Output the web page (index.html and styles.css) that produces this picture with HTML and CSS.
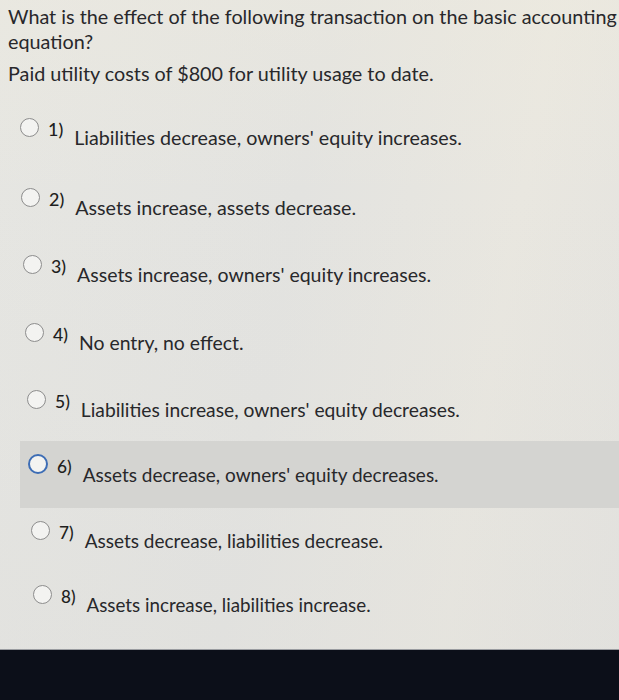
FILE: index.html
```html
<!DOCTYPE html>
<html>
<head>
<meta charset="utf-8">
<link rel="stylesheet" href="styles.css">
</head>
<body>
<div class="page">
  <div class="question">
    <p class="q-main">What is the effect of the following transaction on the basic accounting equation?</p>
    <p class="q-detail">Paid utility costs of $800 for utility usage to date.</p>
  </div>
  <ul class="options">
    <li class="option"><span class="radio"></span><span class="num">1)</span><span class="label">Liabilities decrease, owners' equity increases.</span></li>
    <li class="option"><span class="radio"></span><span class="num">2)</span><span class="label">Assets increase, assets decrease.</span></li>
    <li class="option"><span class="radio"></span><span class="num">3)</span><span class="label">Assets increase, owners' equity increases.</span></li>
    <li class="option"><span class="radio"></span><span class="num">4)</span><span class="label">No entry, no effect.</span></li>
    <li class="option"><span class="radio"></span><span class="num">5)</span><span class="label">Liabilities increase, owners' equity decreases.</span></li>
    <li class="option hover"><span class="radio"></span><span class="num">6)</span><span class="label">Assets decrease, owners' equity decreases.</span></li>
    <li class="option"><span class="radio"></span><span class="num">7)</span><span class="label">Assets decrease, liabilities decrease.</span></li>
    <li class="option"><span class="radio"></span><span class="num">8)</span><span class="label">Assets increase, liabilities increase.</span></li>
  </ul>
</div>
<div class="bezel"></div>
</body>
</html>
```
FILE: styles.css
```css
html, body {
  margin: 0;
  padding: 0;
  height: 700px;
  overflow: hidden;
}
body {
  display: flex;
  flex-direction: column;
  font-family: Lato, "Open Sans", sans-serif;
  color: #28282b;
  background: linear-gradient(100deg, #e6e6e2 0%, #e3e3e0 45%, #e9e7e0 75%, #e4e3df 100%);
}
.page {
  height: 649px;
  flex: none;
  overflow: hidden;
  background: linear-gradient(180deg, rgba(240,236,222,0.35) 0%, rgba(230,230,228,0) 30%, rgba(220,220,218,0.3) 100%);
}
.question {
  padding: 4px 0 0 8px;
  font-size: 19.8px;
  line-height: 25px;
}
.q-main {
  margin: 0;
  width: 640px;
}
.q-detail {
  margin: 7px 0 0;
}
.options {
  list-style: none;
  margin: 0;
  padding: 19px 0 0;
}
.option {
  height: 64px;
  display: flex;
  align-items: center;
  margin-left: 20px;
  padding-left: 0;
  font-size: 19.7px;
}
.option:nth-child(2) { padding-left: 1px; margin-top: 6px; }
.option:nth-child(3) { padding-left: 3px; margin-top: 3px; font-size: 19.5px; }
.option:nth-child(4) { padding-left: 5px; margin-top: 4px; font-size: 19.4px; }
.option:nth-child(5) { padding-left: 7px; margin-top: 3px; font-size: 19.25px; }
.option:nth-child(6) { padding-left: 8px; font-size: 19px; }
.option:nth-child(7) { padding-left: 11px; font-size: 19px; }
.option:nth-child(8) { padding-left: 13px; font-size: 18.8px; }
.option.hover {
  height: 67px;
  background: #d4d4d1;
}
.radio {
  flex: none;
  width: 17px;
  height: 17px;
  border: 1.5px solid #8d8d8d;
  border-radius: 50%;
  background: #f3f3f1;
  margin-bottom: 20px;
}
.hover .radio {
  border: 2px solid #3d6db5;
  width: 16px;
  height: 16px;
  margin-bottom: 22px;
}
.num {
  font-size: 0.91em;
  font-weight: 500;
  color: #1e1e20;
  margin: 0 11px 16px 9px;
}
.bezel {
  flex: 1;
  background: #0c0f19;
  border-top: 1px solid #9a9ca0;
}
```
